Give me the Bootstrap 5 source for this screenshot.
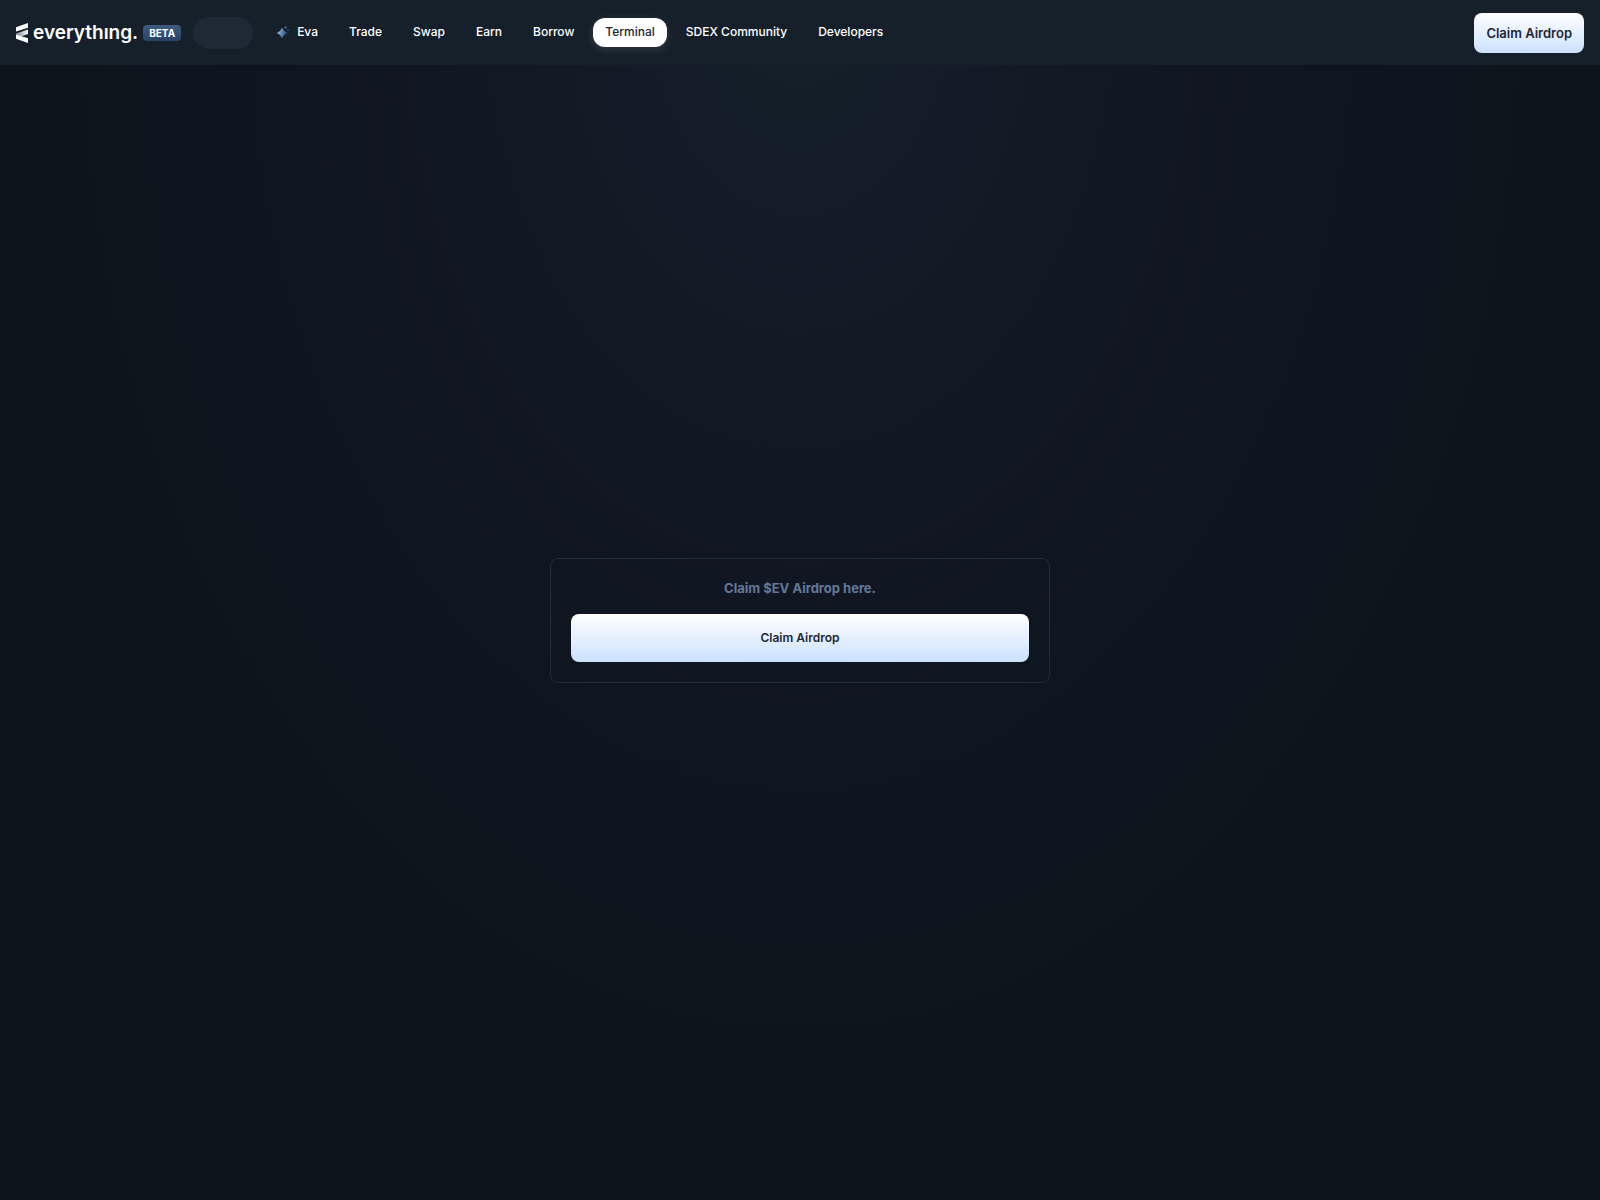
<!DOCTYPE html>
<html lang="en">
<head>
<meta charset="utf-8">
<meta name="viewport" content="width=device-width, initial-scale=1">
<title>Terminal | everything.</title>
<link href="https://cdn.jsdelivr.net/npm/bootstrap@5.3.0/dist/css/bootstrap.min.css" rel="stylesheet">
<style>
  body {
    background: #0c141c radial-gradient(46% 1050px at 50% 0, #13202a 0, #131c28 18%, #101722 55%, #0c141c 100%) no-repeat;
    font-family: Inter, "Liberation Sans", sans-serif;
  }
  .topbar { background: #16202b; min-height: 65px; }
  .brand-link { gap: 5px; }
  .wordmark { font: 600 19px/22px Inter, sans-serif; }
  .beta-tag { font: 700 10px/16px Inter, sans-serif; border-radius: 4px; background: linear-gradient(#3f5b7e, #284468); padding: 0 6px; }
  .head-start { gap: 12px; }
  .placeholder-pill { width: 60px; height: 32px; border-radius: 16px; background: #1e2936; }
  .main-nav { gap: 7px; }
  .main-nav .nav-link { font: 500 12px/21px Inter, sans-serif; color: #fff; border-radius: 12px; padding: 3px 12px 5px; }
  .main-nav .nav-link.active { background: #fff; color: #1d2733; box-shadow: 0 2px 10px rgba(255, 255, 255, .12); }
  .btn-claim { background: linear-gradient(#fff, #cbe1ff); color: #1d2733; border: 0; border-radius: 8px; font: 600 13px/20px Inter, sans-serif; padding: 10px 12px; }
  .btn-claim:hover { background: #cbe1ff; }
  .btn-claim-wide { font-size: 12px; padding: 14px 12px; }
  .claim-box { max-width: 500px; border: 1px solid #222d38; border-radius: 8px; padding: 20px; }
  .claim-note { color: #64789a; font: 700 13px/19px Inter, sans-serif; }
</style>
<script src="https://cdn.jsdelivr.net/npm/bootstrap@5.3.0/dist/js/bootstrap.bundle.min.js"></script>
</head>
<body class="min-vh-100 d-flex flex-column">
<header class="topbar d-flex align-items-center px-3">
  <div class="head-start d-flex align-items-center">
    <a href="#" class="brand-link d-flex align-items-center text-white text-decoration-none">
      <svg width="12" height="20" viewBox="0 0 12 20" aria-hidden="true">
        <defs><linearGradient id="fold"><stop stop-color="#77808a"/><stop offset="1" stop-color="#fff"/></linearGradient></defs>
        <path fill="#fff" d="M0 4.2 12 0v4.7L0 8.6z"/>
        <path fill="url(#fold)" d="M0 10.6 12 6.6V11L5 13.6 0 12z"/>
        <path fill="#fff" d="M0 11.6 12 15.2V20L0 15.8z"/>
      </svg>
      <span class="wordmark">everythıng.</span>
      <span class="beta-tag">BETA</span>
    </a>
    <span class="placeholder-pill"></span>
    <nav class="nav main-nav" aria-label="Main">
      <a class="nav-link d-flex align-items-center" href="#">
        <svg class="me-2" width="12" height="14" viewBox="0 0 13 14" aria-hidden="true">
          <defs><linearGradient id="spark" x2="1" y2=".3"><stop stop-color="#a5d2ff"/><stop offset="1" stop-color="#244a7c"/></linearGradient></defs>
          <path fill="url(#spark)" d="M5.5 2.2Q7 6.4 11.4 8 7 9.6 5.5 13.8 4 9.6 0 8 4 6.4 5.5 2.2z"/>
          <path fill="#4a78ad" d="M9.5 0 10.1 1.6 11.6 2.2 10.1 2.8 9.5 4.4 8.9 2.8 7.4 2.2 8.9 1.6z"/>
          <circle cx="12" cy="5" r="1" fill="#274d7e"/>
        </svg>Eva</a>
      <a class="nav-link" href="#">Trade</a>
      <a class="nav-link" href="#">Swap</a>
      <a class="nav-link" href="#">Earn</a>
      <a class="nav-link" href="#">Borrow</a>
      <a class="nav-link active" aria-current="page" href="#">Terminal</a>
      <a class="nav-link" href="#">SDEX Community</a>
      <a class="nav-link" href="#">Developers</a>
    </nav>
  </div>
  <button type="button" class="btn btn-claim ms-auto">Claim Airdrop</button>
</header>
<main class="flex-grow-1 d-flex align-items-center justify-content-center pb-4">
  <section class="claim-box w-100 text-center">
    <p class="claim-note mb-3">Claim $EV Airdrop here.</p>
    <button type="button" class="btn btn-claim btn-claim-wide w-100">Claim Airdrop</button>
  </section>
</main>
</body>
</html>
